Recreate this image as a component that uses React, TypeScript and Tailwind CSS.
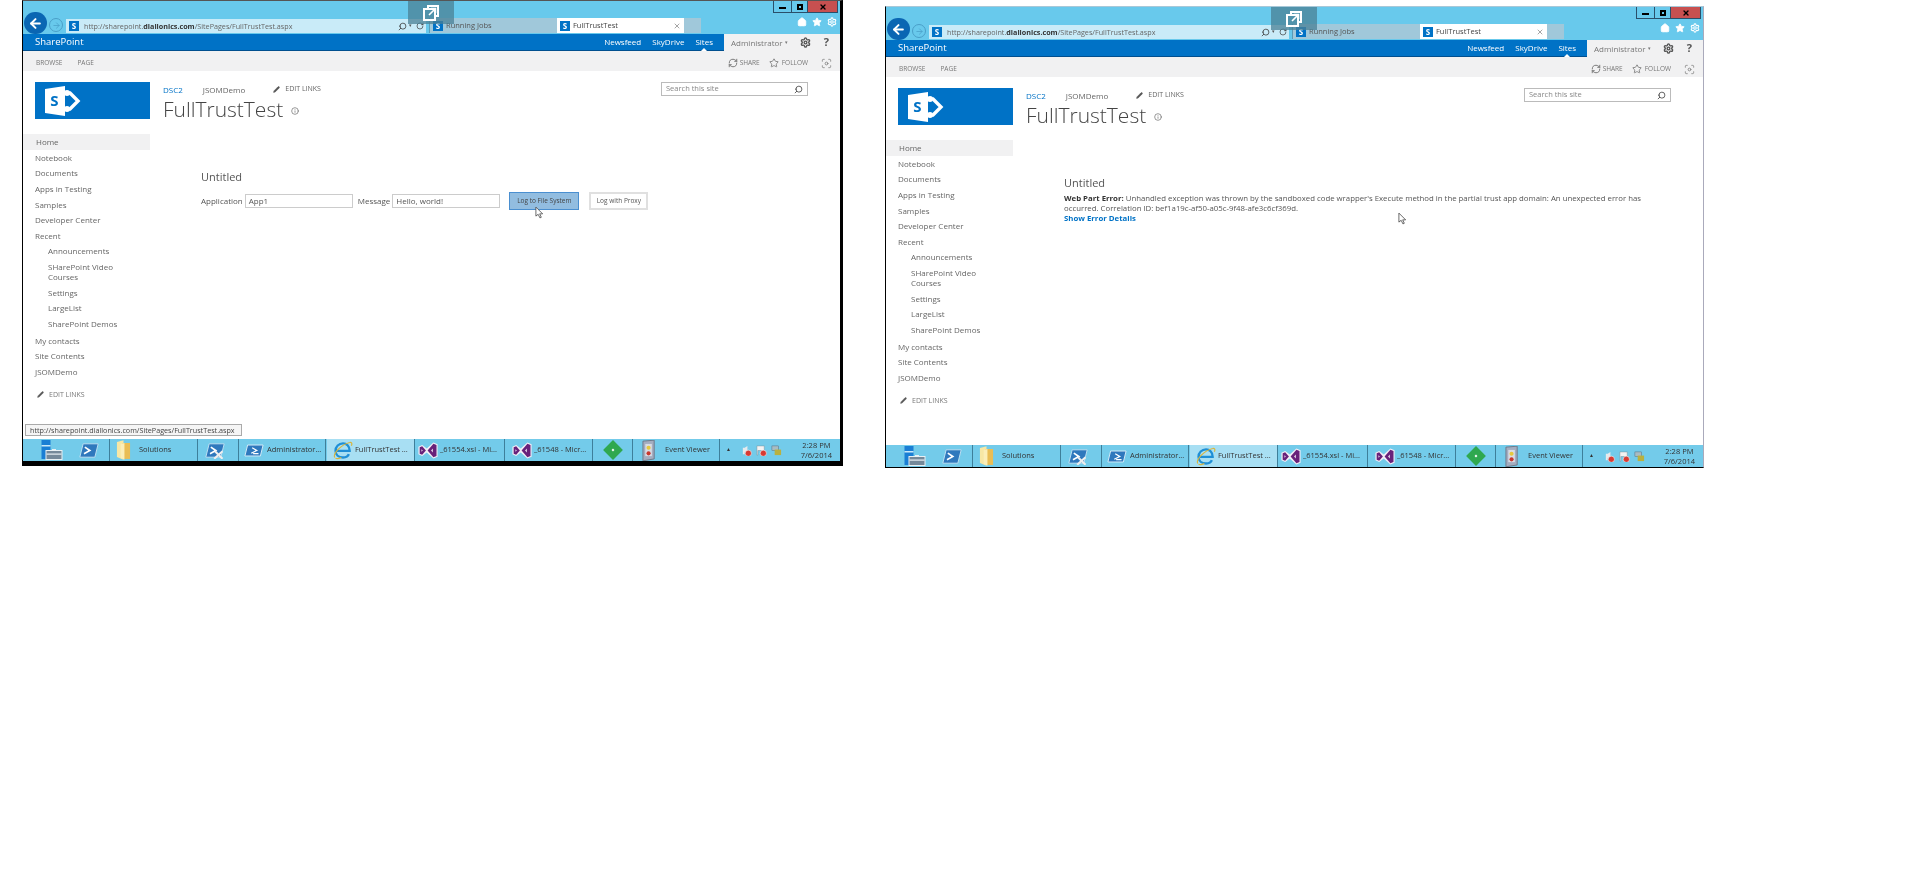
import * as React from "react"
import { ArrowLeft, ArrowRight, Home, Star, Settings, Search, RotateCw, X, Pencil, Info, RefreshCw, Focus } from "lucide-react"

const font = "font-['Open_Sans','Noto_Sans',sans-serif]"

function SpGlyph({ className }: { className?: string }) {
	return (
		<svg viewBox="0 0 36 30" className={className}>
			<path d="M0 3 L20 0 V30 L0 27 Z" fill="#fff" />
			<text x="9.5" y="20" textAnchor="middle" fontSize="15" fontWeight="700" fill="#0072c6" fontFamily="Open Sans">S</text>
			<path d="M22 7 H25 L33 15 L25 23 H22" fill="none" stroke="#fff" strokeWidth="3.4" />
			<circle cx="22" cy="7" r="3" fill="#fff" />
			<circle cx="22" cy="23" r="3" fill="#fff" />
		</svg>
	)
}

function Favicon() {
	return (
		<span className="flex h-[10px] w-[10px] shrink-0 items-center justify-center bg-[#0072c6]">
			<span className="text-[8px] leading-none font-bold text-white">S</span>
		</span>
	)
}

function VsIcon() {
	return (
		<svg viewBox="0 0 24 20" className="h-[17px] w-[20px] shrink-0">
			<path d="M0.5 5.5 L5 3.5 L10.5 7.5 L18.5 0.5 L23.5 2.5 V17.5 L18.5 19.5 L10.5 12.5 L5 16.5 L0.5 14.5 Z" fill="#f3eef6" />
			<path d="M2 6.2 L5 5 L9.5 10 L5 15 L2 13.8 Z M18.5 2 L22.2 3.5 V16.5 L18.5 18 L11.5 10 Z" fill="#68217a" />
			<path d="M4 8.5 L6 10 L4 11.5 Z M18 7.5 V12.5 L15.5 10 Z" fill="#d8c4de" />
		</svg>
	)
}

function ServerIcon() {
	return (
		<svg viewBox="0 0 22 20" className="h-[20px] w-[22px]">
			<rect x="0.5" y="0" width="9" height="19" fill="#1a7ed4" />
			<rect x="0.5" y="5" width="9" height="1.5" fill="#c9e8f8" />
			<rect x="5" y="10.5" width="16" height="9" fill="#75899a" stroke="#e8f0f4" />
			<rect x="5.5" y="13.5" width="15" height="1.2" fill="#e8f0f4" />
			<rect x="11" y="9" width="4" height="2" fill="#e8f0f4" />
		</svg>
	)
}

function PsIcon({ tools }: { tools?: boolean }) {
	return (
		<svg viewBox="0 0 24 20" className="h-[17px] w-[20px] shrink-0">
			<path d="M5 2 H23 L19 18 H1 Z" fill="#2f78bd" stroke="#cfe8f5" />
			<path d="M7 6 L13 10 L6 14" fill="none" stroke="#fff" strokeWidth="2" />
			{tools && <path d="M11 20 L21 11 M12 11 L21 20" stroke="#eee" strokeWidth="2.5" />}
		</svg>
	)
}

function AdminIcon() {
	return (
		<svg viewBox="0 0 22 14" className="h-[13px] w-[20px] shrink-0">
			<path d="M4 1 H21 L18 13 H1 Z" fill="#2f78bd" stroke="#dff0f8" />
			<path d="M9 4 L14 7 L8 10 M10 10.5 H16" fill="none" stroke="#fff" strokeWidth="1.4" />
		</svg>
	)
}

function FolderIcon() {
	return (
		<svg viewBox="0 0 16 21" className="h-[20px] w-[15px] shrink-0">
			<path d="M1 2 L8 0 V21 L1 18 Z" fill="#f7e7a4" />
			<path d="M7 3 H15 V20 H7 Z" fill="#e9bd55" />
			<path d="M5 4 L9 3 V21 L5 19 Z" fill="#fbeeb8" />
		</svg>
	)
}

function IeIcon() {
	return (
		<svg viewBox="0 0 24 22" className="h-[20px] w-[20px] shrink-0" fill="none">
			<path d="M4 12 H20 C20 6 16 3 12 3 C7 3 3 7 3 12 C3 17 7 20 12 20 C15 20 18 19 19 16" stroke="#1f8fd6" strokeWidth="2.8" />
			<path d="M2 20 C0 15 9 5 20 2 C23 1 23 4 22 6" stroke="#d9b53c" strokeWidth="1.4" />
			<path d="M3 21 C5 22 8 21 10 20" stroke="#d9b53c" strokeWidth="1.4" />
		</svg>
	)
}

function ViewerIcon() {
	return (
		<svg viewBox="0 0 16 22" className="h-[21px] w-[15px] shrink-0">
			<path d="M1 1 L13 0 V20 L1 22 Z" fill="#a4adc0" stroke="#6d7686" />
			<rect x="3.5" y="4" width="7" height="13" fill="#d9dce4" />
			<circle cx="7" cy="8" r="2.2" fill="#e6c83c" />
			<circle cx="7" cy="14" r="2.2" fill="#c8382e" />
		</svg>
	)
}

function TrayBadge() {
	return <circle cx="8" cy="9" r="3.4" fill="#d83a32" stroke="#fff" strokeWidth="0.6" />
}

function TrayIcons() {
	return (
		<span className="ml-[10px] flex gap-[4px]">
			<svg viewBox="0 0 12 12" className="h-[11px] w-[11px]">
				<path d="M2 3 H4 V10 H2 Z M4 3 L7 1 V8 H4 Z" fill="#e6eaed" />
				<TrayBadge />
			</svg>
			<svg viewBox="0 0 12 12" className="h-[11px] w-[11px]">
				<path d="M1 1 H9 V6 H2 V11 H1 Z" fill="#f3f3f3" stroke="#7a8a94" strokeWidth="0.5" />
				<TrayBadge />
			</svg>
			<svg viewBox="0 0 12 12" className="h-[11px] w-[11px]">
				<rect x="1" y="1" width="7" height="5" fill="#a7bcc4" stroke="#567" strokeWidth="0.5" />
				<rect x="4" y="5" width="7" height="6" fill="#b9b13f" />
			</svg>
		</span>
	)
}

function CursorIcon({ className }: { className: string }) {
	return (
		<svg viewBox="0 0 10 14" className={className}>
			<path d="M1 1 V11 L3.5 9 L5.5 13 L7 12.3 L5.2 8.5 H8.5 Z" fill="#fff" stroke="#333" strokeWidth="0.8" />
		</svg>
	)
}

function BrowserChrome() {
	return (
		<div className="relative flex h-[33px] shrink-0 bg-[#68c9ec]">
			<div className="flex flex-1 items-end pb-[1px] pl-[1px]">
				<span className="mr-[2px] mb-[-1px] flex h-[22px] w-[23px] items-center justify-center rounded-full bg-[#0a66b3]">
					<ArrowLeft size={15} strokeWidth={3.2} className="text-white" />
				</span>
				<span className="mb-[1px] flex h-[14px] w-[14px] items-center justify-center rounded-full border border-[#4a9fc8]">
					<ArrowRight size={9} className="text-[#4a9fc8]" />
				</span>
				<div className="ml-[3px] flex h-[14px] w-[360px] items-center bg-[#c9ebf8] pl-[3px]">
					<Favicon />
					<span className="ml-[5px] flex-1 truncate text-[7.2px] text-[#666]">
						http://sharepoint.<b className="text-[#333]">diallonics.com</b>/SitePages/FullTrustTest.aspx
					</span>
					<Search size={9} className="mr-[2px] -scale-x-100 text-[#333]" />
					<span className="mr-[4px] text-[5px] text-[#555]">▾</span>
					<RotateCw size={8} className="mr-[2px] text-[#333]" />
				</div>
				<div className="ml-[3px] flex h-[15px] w-[128px] items-center border-l border-[#5a9ab5] bg-[#a0c8da] pl-[3px] text-[7.5px] text-[#555]">
					<Favicon />
					<span className="ml-[3px]">Running Jobs</span>
				</div>
				<div className="flex h-[15px] w-[127px] items-center bg-white pl-[3px] text-[7.5px] text-[#444]">
					<Favicon />
					<span className="ml-[3px] flex-1">FullTrustTest</span>
					<X size={8} className="mr-[3px] text-[#777]" />
				</div>
				<div className="h-[15px] w-[17px] bg-[#a0c8da]" />
			</div>
			<div className="flex w-[72px] flex-col items-end pr-[2px]">
				<div className="flex h-[12px] border border-t-0 border-[#2a4f6a]">
					<span className="flex w-[18px] items-center justify-center border-r border-[#2a4f6a]">
						<span className="h-[2px] w-[7px] translate-y-[1px] bg-black" />
					</span>
					<span className="flex w-[16px] items-center justify-center border-r border-[#2a4f6a]">
						<span className="h-[6px] w-[6px] border-2 border-black" />
					</span>
					<span className="flex w-[29px] items-center justify-center bg-[#c75050]">
						<X size={8} strokeWidth={4} className="text-black" />
					</span>
				</div>
				<div className="mt-[4px] flex gap-[5px] pr-[1px]">
					<Home size={10} fill="#fff" className="text-white" />
					<Star size={10} fill="#fff" className="text-white" />
					<Settings size={10} strokeWidth={2.6} className="text-white" />
				</div>
			</div>
			<div className="absolute top-0 left-[385px] flex h-[23px] w-[46px] items-center justify-center bg-[#4a8095]/75">
				<svg viewBox="0 0 16 16" className="h-[16px] w-[16px]" fill="none" stroke="#fff" strokeWidth="2">
					<path d="M5 4 V1 H15 V11 H12" />
					<rect x="1" y="4" width="11" height="11" />
					<path d="M6 10 L12 4 M8 3.5 H12.5 V8" strokeWidth="1.6" />
				</svg>
			</div>
		</div>
	)
}

function SuiteBar() {
	return (
		<div className="flex h-[17px] shrink-0 text-[8px]">
			<div className="flex flex-1 items-center justify-between border-b border-[#004f8f] bg-[#0072c6] pr-[11px] pl-[12px] text-white">
				<span className="text-[9.5px]">SharePoint</span>
				<div className="relative flex gap-[11px]">
					<span>Newsfeed</span>
					<span>SkyDrive</span>
					<span>Sites</span>
					<span className="absolute right-[6px] bottom-[-3px] h-0 w-0 border-x-[3px] border-b-[3px] border-x-transparent border-b-white" />
				</div>
			</div>
			<div className="flex w-[116px] items-center bg-[#f1f1f2] pl-[7px] text-[#777]">
				<span>Administrator</span>
				<span className="ml-[2px] text-[5px]">▾</span>
				<Settings size={11} strokeWidth={3} className="ml-[12px] text-[#555]" />
				<span className="ml-[13px] text-[11px] font-bold text-[#555]">?</span>
			</div>
		</div>
	)
}

function Ribbon() {
	return (
		<div className="flex h-[20px] shrink-0 items-center bg-[#f1f1f2] pt-[4px] pr-[8px] pl-[13px] text-[6.5px] text-[#777]">
			<span>BROWSE</span>
			<span className="ml-[15px]">PAGE</span>
			<RefreshCw size={10} className="ml-auto text-[#666]" />
			<span className="ml-[2px]">SHARE</span>
			<Star size={10} className="ml-[9px] text-[#777]" />
			<span className="ml-[3px]">FOLLOW</span>
			<Focus size={11} className="ml-[13px] text-[#888]" />
		</div>
	)
}

function Sidebar() {
	const top = ["Notebook", "Documents", "Apps in Testing", "Samples", "Developer Center", "Recent"]
	const sub = ["Announcements", "SHarePoint Video Courses", "Settings", "LargeList", "SharePoint Demos"]
	const bottom = ["My contacts", "Site Contents", "JSOMDemo"]
	return (
		<div className="w-[127px] shrink-0 pt-[11px] text-[8px] text-[#666]">
			<div className="ml-[12px] flex h-[37px] items-center bg-[#0072c6] pl-[10px]">
				<SpGlyph className="h-[30px] w-[36px]" />
			</div>
			<div className="mt-[15px] flex h-[16px] items-center bg-[#f1f1f2] pl-[13px]">Home</div>
			{top.map((t) => (
				<div key={t} className="flex h-[15.6px] items-center pl-[12px]">{t}</div>
			))}
			{sub.map((t) => (
				<div key={t} className="flex min-h-[15.6px] items-center py-[2.5px] pr-[8px] pl-[25px] leading-[10.5px]">{t}</div>
			))}
			<div className="h-[1px]" />
			{bottom.map((t) => (
				<div key={t} className="flex h-[15.6px] items-center pl-[12px]">{t}</div>
			))}
			<div className="mt-[10px] ml-[14px] flex items-center text-[7px] text-[#777]">
				<Pencil size={7} fill="#555" />
				<span className="ml-[5px]">EDIT LINKS</span>
			</div>
		</div>
	)
}

function TaskItem({ className, children }: { className: string; children: React.ReactNode }) {
	return <div className={`flex items-center border-r border-[#3e7f9a] ${className}`}>{children}</div>
}

function Taskbar() {
	return (
		<div className="flex h-[22px] shrink-0 bg-[#73cbea] text-[7.5px] text-[#333]">
			<TaskItem className="w-[87px] justify-between pr-[10px] pl-[18px]"><ServerIcon /><PsIcon /></TaskItem>
			<TaskItem className="w-[88px] gap-[8px] pl-[6px]"><FolderIcon />Solutions</TaskItem>
			<TaskItem className="w-[41px] pl-[7px]"><PsIcon tools /></TaskItem>
			<TaskItem className="w-[87px] gap-[3px] pl-[5px]"><AdminIcon />Administrator...</TaskItem>
			<TaskItem className="ml-[1px] w-[88px] gap-[2px] bg-[#a8dff3] pl-[6px]"><IeIcon />FullTrustTest ...</TaskItem>
			<TaskItem className="w-[90px] gap-[2px] pl-[3px]"><VsIcon />_61554.xsl - Mi...</TaskItem>
			<TaskItem className="w-[88px] gap-[2px] pl-[7px]"><VsIcon />_61548 - Micr...</TaskItem>
			<TaskItem className="w-[40px] justify-center">
				<span className="flex h-[14px] w-[14px] rotate-45 items-center justify-center bg-[#2fa84f]">
					<span className="h-[2px] w-[2px] bg-white" />
				</span>
			</TaskItem>
			<TaskItem className="w-[87px] gap-[8px] pl-[9px]"><ViewerIcon />Event Viewer</TaskItem>
			<div className="flex flex-1 items-center pr-[8px] pl-[6px]">
				<span className="text-[5px]">▲</span>
				<TrayIcons />
				<span className="ml-auto text-center leading-[10px]">2:28 PM<br />7/6/2014</span>
			</div>
		</div>
	)
}

function SharePointWindow({ outer, children }: { outer: string; children: React.ReactNode }) {
	return (
		<div className={`relative flex w-[817px] shrink-0 flex-col box-content blur-[0.35px] ${font} ${outer}`}>
			<BrowserChrome />
			<SuiteBar />
			<Ribbon />
			<div className="flex h-[368px] shrink-0 bg-white">
				<Sidebar />
				<div className="flex-1 pt-[11px] pl-[13px]">
					<div className="flex justify-between pr-[32px]">
						<div>
							<div className="flex h-[14px] items-center pt-[1px] text-[8px] text-[#666]">
								<span className="text-[#0072c6]">DSC2</span>
								<span className="ml-[20px]">JSOMDemo</span>
								<Pencil size={7} fill="#555" className="ml-[28px]" />
								<span className="ml-[5px] text-[7px]">EDIT LINKS</span>
							</div>
							<div className="flex items-center text-[21px] leading-[27px] font-light text-[#444]">
								FullTrustTest
								<Info size={8} className="mt-[3px] ml-[8px] text-[#666]" />
							</div>
						</div>
						<div className="flex h-[14px] w-[147px] items-center justify-between border border-[#bbb] px-[4px] text-[7.5px] text-[#888]">
							<span>Search this site</span>
							<Search size={9} className="-scale-x-100 text-[#333]" />
						</div>
					</div>
					<div className="pt-[47px] pl-[38px]">
						<div className="text-[11px] leading-[14px] text-[#555]">Untitled</div>
						{children}
					</div>
				</div>
			</div>
			<Taskbar />
		</div>
	)
}

export default function App() {
	return (
		<div className="flex h-[877px] items-start gap-[42px] bg-white pl-[22px]">
			<SharePointWindow outer="border-t border-b-[5px] border-l border-r-[3px] border-t-[#555] border-b-black border-l-black border-r-black">
				<div className="mt-[8px] flex items-center text-[8px] text-[#555]">
					<span>Application</span>
					<span className="ml-[2px] flex h-[14px] w-[108px] items-center border border-[#ccc] pl-[3px]">App1</span>
					<span className="ml-[5px]">Message</span>
					<span className="ml-[2px] flex h-[14px] w-[108px] items-center border border-[#ccc] pl-[3px]">Hello, world!</span>
					<span className="ml-[9px] flex h-[18px] w-[70px] items-center justify-center border border-[#4a8fd0] bg-[#92bde0] text-[6.5px] text-[#444]">Log to File System</span>
					<span className="ml-[10px] flex h-[18px] w-[59px] items-center justify-center border-2 border-[#e0e0e0] text-[6.5px] text-[#555]">Log with Proxy</span>
				</div>
				<CursorIcon className="absolute top-[205px] left-[512px] h-[13px] w-[9px]" />
				<div className="absolute bottom-[25px] left-[2px] flex h-[12px] w-[217px] items-center border border-[#aaa] bg-[#f5f5f5] pl-[4px] text-[7.2px] text-[#444]">
					http://sharepoint.diallonics.com/SitePages/FullTrustTest.aspx
				</div>
			</SharePointWindow>
			<SharePointWindow outer="mt-[6px] border-t border-b border-l border-r border-t-[#a8c8d8] border-b-black border-l-black border-r-[#aab]">
				<div className="mt-[3px] w-[590px] text-[7.8px] leading-[10px] text-[#555]">
					<b className="text-[#333]">Web Part Error:</b> Unhandled exception was thrown by the sandboxed code wrapper's Execute method in the partial trust app domain: An unexpected error has occurred. Correlation ID: bef1a19c-af50-a05c-9f48-afe3c6cf369d.
					<br />
					<b className="text-[#0072c6]">Show Error Details</b>
				</div>
				<CursorIcon className="absolute top-[205px] left-[512px] h-[13px] w-[9px]" />
			</SharePointWindow>
		</div>
	)
}
